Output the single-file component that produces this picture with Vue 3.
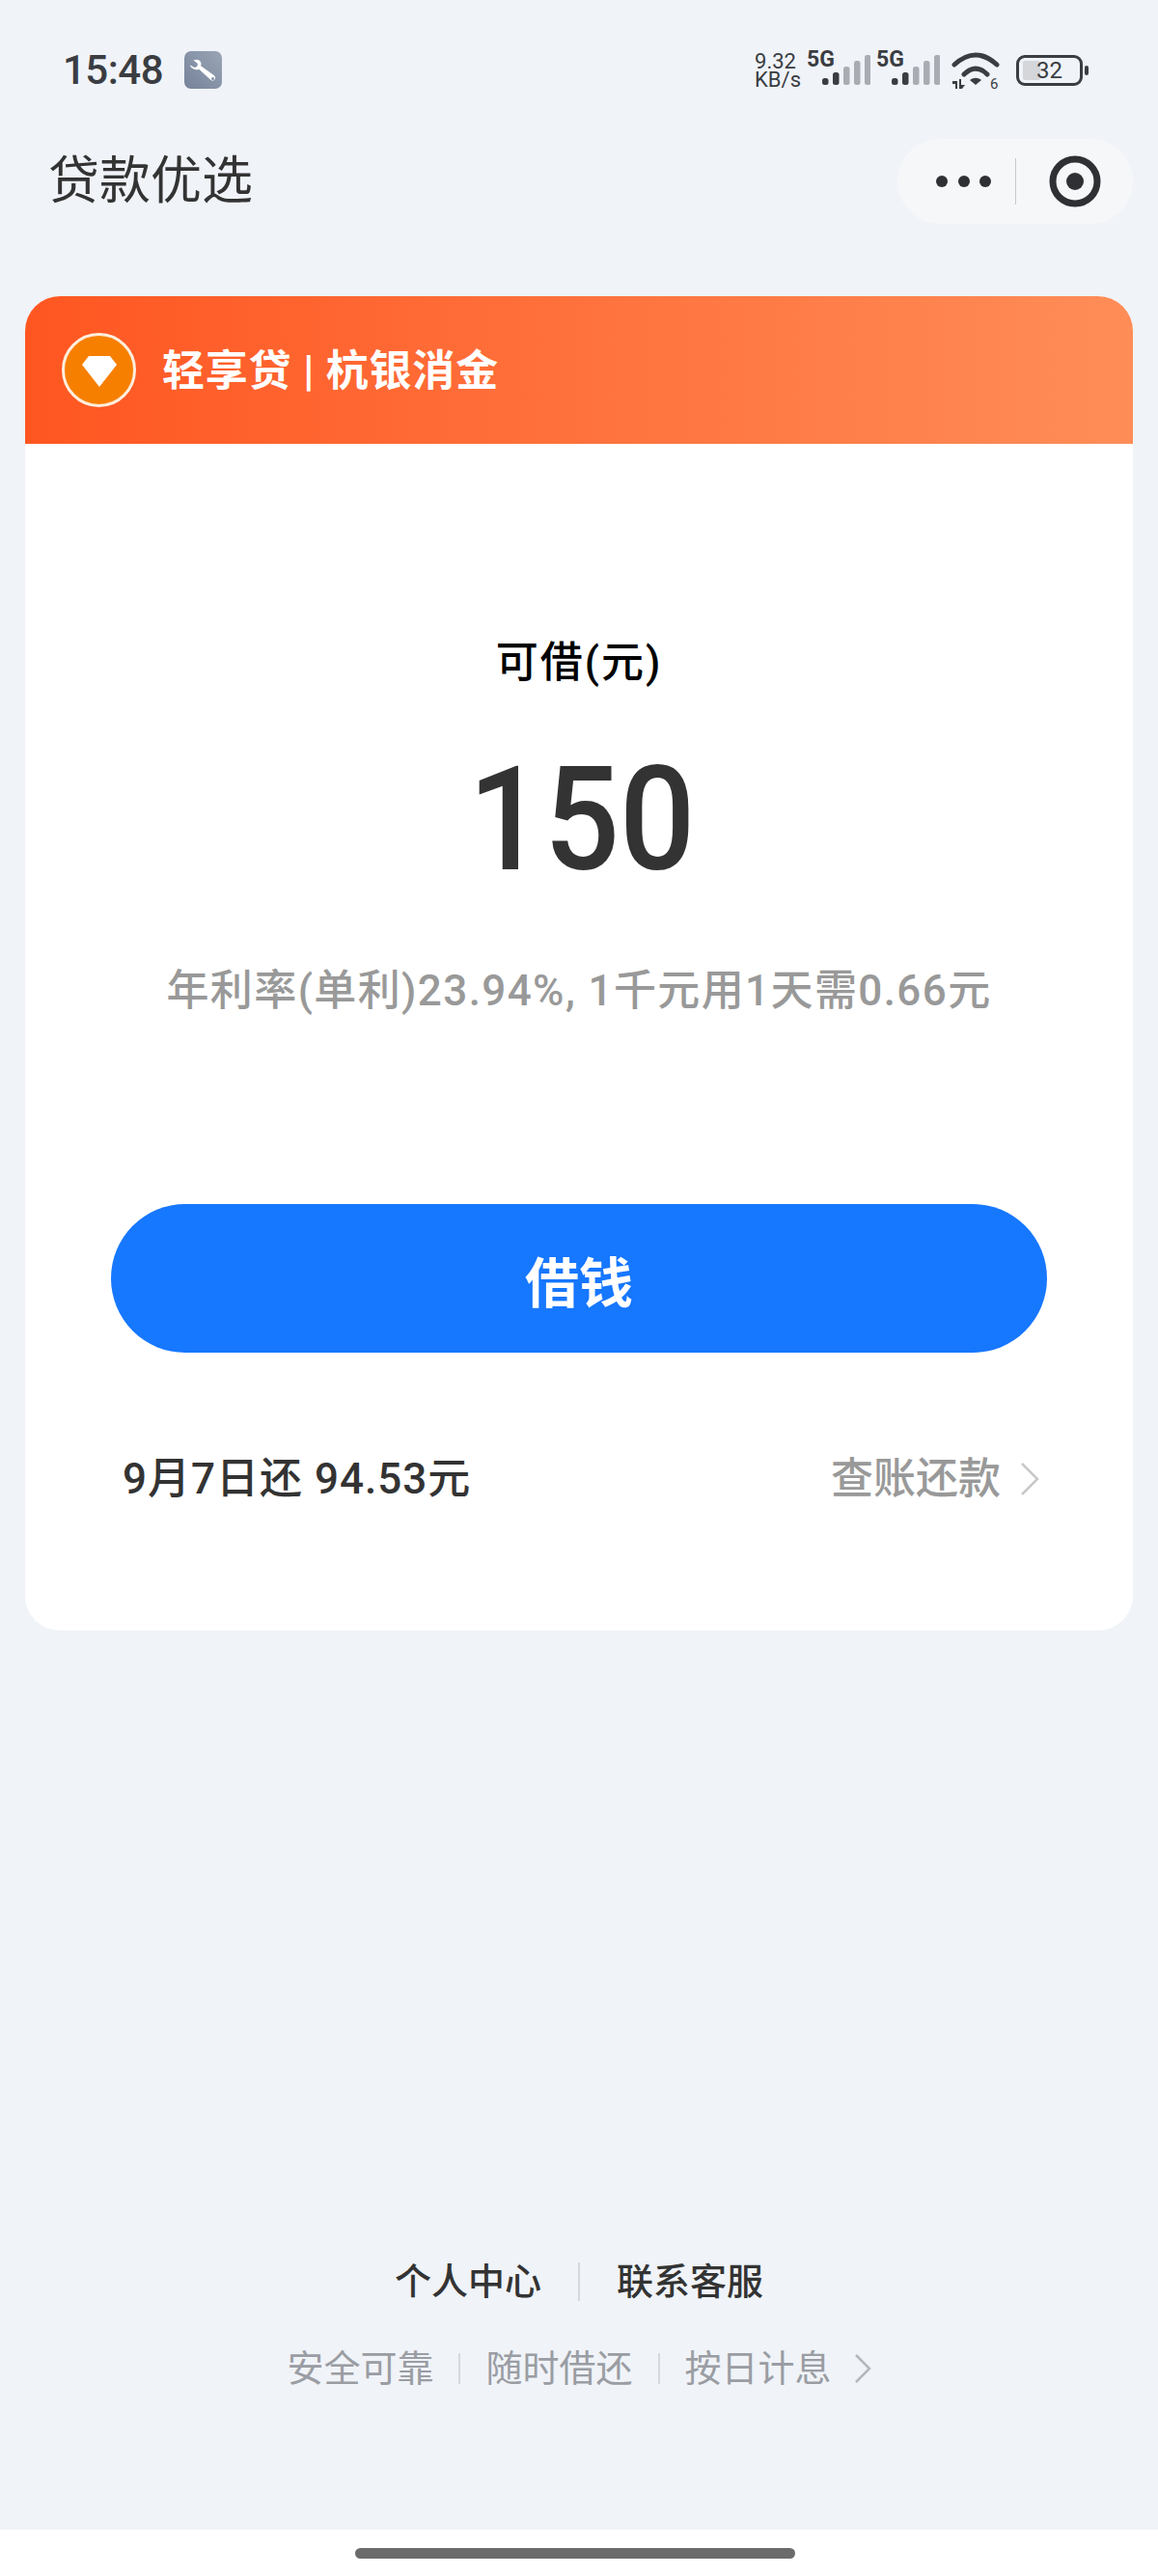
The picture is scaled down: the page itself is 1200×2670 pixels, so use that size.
<script setup>
const signalBars = [
  { x: 0, y: 24, h: 7, fill: "#3a3d42" },
  { x: 11, y: 18, h: 13, fill: "#3a3d42" },
  { x: 22, y: 12, h: 19, fill: "#a9adb3" },
  { x: 33, y: 6, h: 25, fill: "#a9adb3" },
  { x: 44, y: 0, h: 31, fill: "#a9adb3" }
];
const tags = ["安全可靠", "随时借还", "按日计息"];
</script>

<template>
  <div class="page">
    <div class="status">
      <span class="time">15:48</span>
      <span class="tool">
        <svg width="39" height="39" viewBox="0 0 39 39">
          <defs>
            <linearGradient id="toolBg" x1="1" y1="0" x2="0" y2="1">
              <stop offset="0" stop-color="#9aa5b5" />
              <stop offset="1" stop-color="#75829a" />
            </linearGradient>
          </defs>
          <rect width="39" height="39" rx="7" fill="url(#toolBg)" />
          <path d="M6 14.5l4.6 2.6 2.7-1.2.6-3-4.4-3.4c3-1.4 6.4-.8 7.5 1.8.6 1.5.5 2.9.1 4l13.6 9.800c1.600 1.200 1.800 3.100.8 4.400-1.100 1.400-3 1.500-4.300.3L15.300 18.700c-2 .9-4.600.8-6.500-.6C7 16.900 6 15.800 6 14.500z" fill="#fff" />
          <circle cx="29.500" cy="28.500" r="1.500" fill="#8592a6" />
        </svg>
      </span>
      <span class="spacer"></span>
      <span class="speed">9.32<br />KB/s</span>
      <span class="net">
        <b>5G</b>
        <svg class="bars" width="50" height="31" viewBox="0 0 50 31">
          <rect v-for="b in signalBars" :key="b.x" :x="b.x" :y="b.y" width="6.500" :height="b.h" rx="2.500" :fill="b.fill" />
        </svg>
      </span>
      <span class="net">
        <b>5G</b>
        <svg class="bars" width="50" height="31" viewBox="0 0 50 31">
          <rect v-for="b in signalBars" :key="b.x" :x="b.x" :y="b.y" width="6.500" :height="b.h" rx="2.500" :fill="b.fill" />
        </svg>
      </span>
      <svg class="wifi" width="52" height="44" viewBox="0 0 52 44">
        <path d="M3 14Q25 -6 47 14" fill="none" stroke="#3a3d42" stroke-width="5" stroke-linecap="round" />
        <path d="M13 24Q25 12 37 24" fill="none" stroke="#3a3d42" stroke-width="5" stroke-linecap="round" />
        <path d="M19 30c4-3 8-3 12 0l-6 5z" fill="#3a3d42" />
        <path d="M1 31h5v8H4v-5H1zM8 39v-10h2v6h4l-3 4z" fill="#3a3d42" />
        <text x="40" y="39" font-size="15" fill="#3a3d42" font-family="Roboto, sans-serif">6</text>
      </svg>
      <span class="battery">
        <span class="level"></span>
        <span class="num">32</span>
      </span>
      <span class="tip"></span>
    </div>

    <div class="nav">
      <span class="title">贷款优选</span>
      <div class="capsule">
        <span class="dots"><i></i><i></i><i></i></span>
        <span class="cap-line"></span>
        <svg width="60" height="60" viewBox="0 0 60 60">
          <circle cx="30" cy="30" r="23" fill="none" stroke="#2f3033" stroke-width="7" />
          <circle cx="30" cy="30" r="9" fill="#2f3033" />
        </svg>
      </div>
    </div>

    <div class="card">
      <div class="card-head">
        <span class="badge">
          <svg width="36" height="32" viewBox="0 0 36 32">
            <path d="M7 0h22l7 9-18 23L0 9z" fill="#fff" />
          </svg>
        </span>
        <span class="brand">轻享贷 | 杭银消金</span>
      </div>
      <div class="card-body">
        <div class="label">可借(元)</div>
        <div class="amount">150</div>
        <div class="rate">年利率(单利)23.94%, 1千元用1天需0.66元</div>
        <button class="borrow">借钱</button>
        <div class="repay">
          <span class="due">9月7日还 94.53元</span>
          <span class="link">
            查账还款
            <svg width="20" height="36" viewBox="0 0 20 36">
              <path d="M2 2l16 16L2 34" fill="none" stroke="#c8c8c8" stroke-width="2.500" />
            </svg>
          </span>
        </div>
      </div>
    </div>

    <div class="spacer"></div>

    <div class="foot">
      <div class="foot-links">
        <span>个人中心</span>
        <i class="sep tall"></i>
        <span>联系客服</span>
      </div>
      <div class="foot-tags">
        <template v-for="(t, i) in tags" :key="t">
          <i v-if="i > 0" class="sep"></i>
          <span>{{ t }}</span>
        </template>
        <svg class="foot-arrow" width="18" height="32" viewBox="0 0 18 32">
          <path d="M2 2l14 14L2 30" fill="none" stroke="#b4b8be" stroke-width="2.500" />
        </svg>
      </div>
    </div>

    <div class="home">
      <span class="handle"></span>
    </div>
  </div>
</template>

<style scoped>
.page {
  width: 1200px;
  height: 2670px;
  display: flex;
  flex-direction: column;
  background: #f0f3f8;
  font-family: Roboto, "Noto Sans CJK SC", sans-serif;
  color: #333;
  overflow: hidden;
}
.spacer {
  flex: 1;
}

.status {
  display: flex;
  align-items: center;
  height: 39px;
  margin-top: 53px;
  padding: 0 72px 0 65px;
  color: #3a3d42;
}
.time {
  font-size: 42px;
  font-weight: 500;
  line-height: 39px;
  letter-spacing: -0.5px;
}
.tool {
  display: flex;
  margin-left: 22px;
}
.speed {
  font-size: 22px;
  line-height: 19px;
}
.net {
  position: relative;
  width: 66px;
  height: 39px;
  margin-left: 6px;
}
.net b {
  position: absolute;
  left: 0;
  top: -3px;
  font-size: 23px;
  line-height: 24px;
  font-weight: 700;
}
.bars {
  position: absolute;
  left: 16px;
  top: 4px;
}
.wifi {
  margin: 5px 0 0 12px;
}
.battery {
  position: relative;
  display: flex;
  align-items: center;
  justify-content: center;
  box-sizing: border-box;
  width: 69px;
  height: 32px;
  margin-left: 15px;
  border: 3px solid #3a3d42;
  border-radius: 9px;
}
.level {
  position: absolute;
  left: 4px;
  top: 3px;
  bottom: 3px;
  width: 18px;
  background: #d4d6da;
  border-radius: 2px;
}
.num {
  position: relative;
  font-size: 24px;
  line-height: 26px;
}
.tip {
  width: 4px;
  height: 10px;
  margin-left: 2px;
  background: #3a3d42;
  border-radius: 2px;
}

.nav {
  display: flex;
  align-items: center;
  justify-content: space-between;
  height: 88px;
  margin-top: 52px;
  padding: 0 26px 0 50px;
}
.title {
  font-size: 53px;
  line-height: 60px;
  color: #333;
}
.capsule {
  display: flex;
  align-items: center;
  box-sizing: border-box;
  width: 244px;
  height: 88px;
  padding-left: 40px;
  background: #f6f7f9;
  border-radius: 44px;
}
.dots {
  display: flex;
  gap: 10.500px;
}
.dots i {
  width: 12px;
  height: 12px;
  background: #2f3033;
  border-radius: 50%;
}
.cap-line {
  width: 1px;
  height: 48px;
  margin: 0 31px 0 25px;
  background: #c6c8cc;
}

.card {
  margin: 75px 26px 0;
  height: 1383px;
  background: #fff;
  border-radius: 36px;
  overflow: hidden;
}
.card-head {
  display: flex;
  align-items: center;
  height: 153px;
  padding-left: 38px;
  background: linear-gradient(90deg, #ff5621, #ff8d58);
}
.badge {
  display: flex;
  align-items: center;
  justify-content: center;
  box-sizing: border-box;
  width: 77px;
  height: 77px;
  padding-top: 2px;
  background: #f77f00;
  border: 3px solid #ffeedd;
  border-radius: 50%;
}
.brand {
  margin: 3px 0 0 27px;
  font-size: 44px;
  line-height: 50px;
  font-weight: 700;
  letter-spacing: 0.8px;
  color: #fff;
}
.card-body {
  display: flex;
  flex-direction: column;
  align-items: center;
  padding-top: 199px;
}
.label {
  font-size: 44px;
  line-height: 56px;
  font-weight: 500;
  letter-spacing: 2px;
  color: #000;
}
.amount {
  margin: 60px 0 0 6px;
  font-size: 150px;
  line-height: 150px;
  font-weight: 500;
  color: #333;
  transform: scaleX(0.92);
}
.rate {
  margin-top: 72px;
  font-size: 44px;
  line-height: 60px;
  font-weight: 500;
  letter-spacing: 1.4px;
  color: #999;
}
.borrow {
  width: 970px;
  height: 154px;
  margin-top: 191px;
  padding: 0;
  border: 0;
  border-radius: 77px;
  background: #1677ff;
  color: #fff;
  font-family: inherit;
  font-size: 56px;
  font-weight: 700;
}
.repay {
  display: flex;
  align-items: center;
  justify-content: space-between;
  align-self: stretch;
  margin-top: 101px;
  padding: 0 97px 0 101px;
}
.due {
  font-size: 44px;
  line-height: 60px;
  font-weight: 500;
  letter-spacing: 1px;
  color: #333;
}
.link {
  display: flex;
  align-items: center;
  gap: 20px;
  font-size: 44px;
  line-height: 60px;
  font-weight: 500;
  color: #999;
}

.foot {
  display: flex;
  flex-direction: column;
  align-items: center;
  gap: 40px;
  padding-bottom: 142px;
}
.foot-links,
.foot-tags {
  display: flex;
  align-items: center;
  height: 50px;
  line-height: 50px;
}
.foot-links {
  gap: 38px;
  font-size: 38px;
  font-weight: 500;
  color: #333;
}
.foot-tags {
  gap: 26px;
  font-size: 38px;
  color: #9a9da3;
}
.sep {
  width: 2px;
  height: 32px;
  background: #d5d8dd;
}
.sep.tall {
  height: 40px;
}
.foot-arrow {
  margin-left: -3px;
}

.home {
  display: flex;
  justify-content: center;
  height: 48px;
  padding: 19px 8px 0 0;
  box-sizing: border-box;
  background: #fff;
}
.handle {
  width: 456px;
  height: 11px;
  background: #6b6b6b;
  border-radius: 6px;
}
</style>
